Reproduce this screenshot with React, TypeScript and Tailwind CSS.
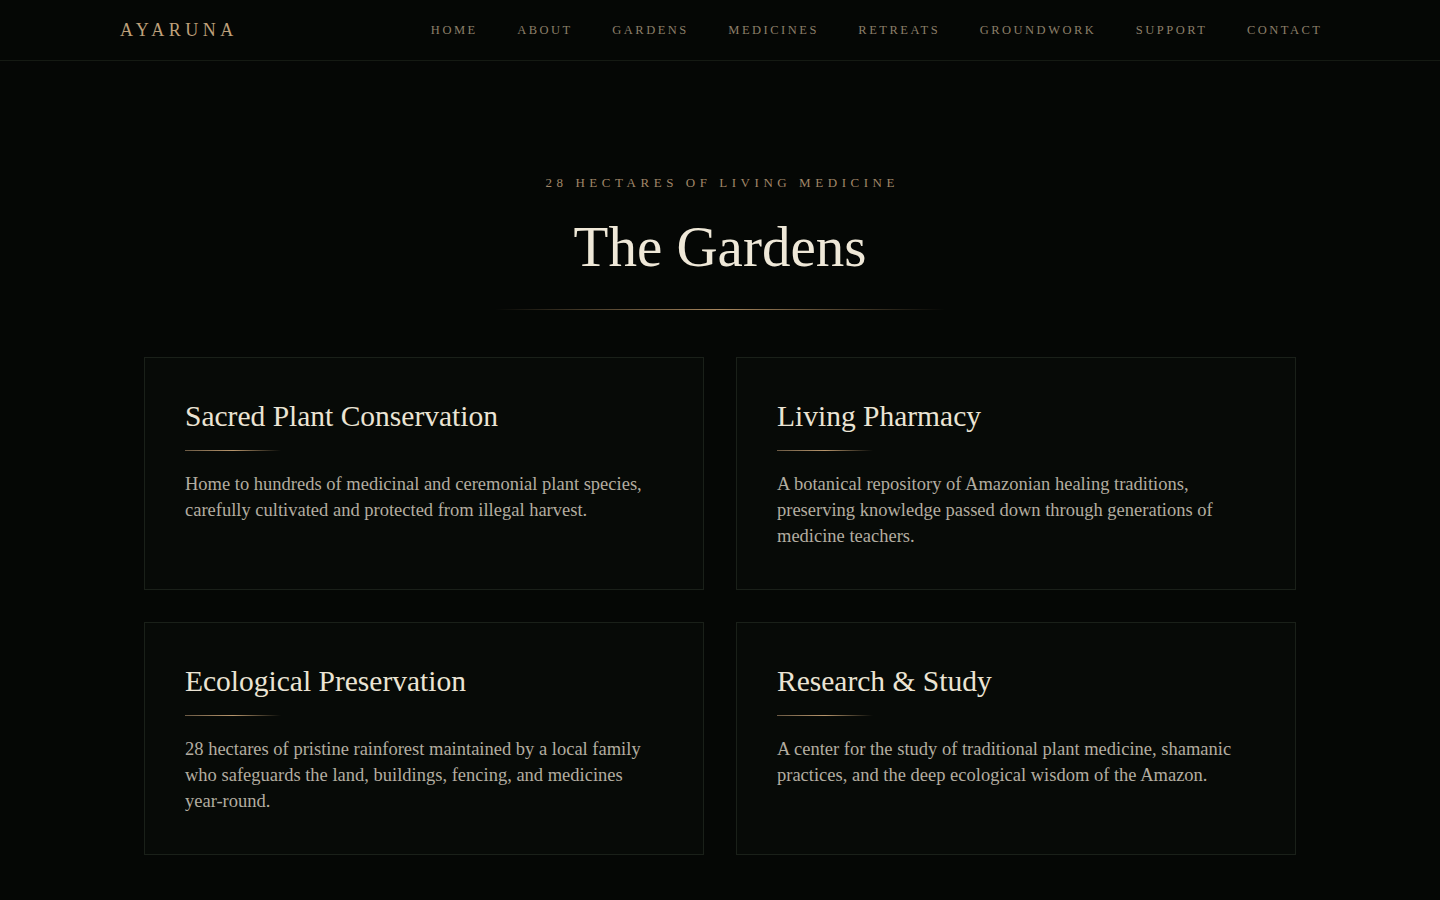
import React from "react";

const serif = { fontFamily: '"Liberation Serif", "Times New Roman", serif' };

const nav = ["Home", "About", "Gardens", "Medicines", "Retreats", "Groundwork", "Support", "Contact"];

const cards = [
  {
    title: "Sacred Plant Conservation",
    body: "Home to hundreds of medicinal and ceremonial plant species, carefully cultivated and protected from illegal harvest.",
  },
  {
    title: "Living Pharmacy",
    body: "A botanical repository of Amazonian healing traditions, preserving knowledge passed down through generations of medicine teachers.",
  },
  {
    title: "Ecological Preservation",
    body: "28 hectares of pristine rainforest maintained by a local family who safeguards the land, buildings, fencing, and medicines year-round.",
  },
  {
    title: "Research & Study",
    body: "A center for the study of traditional plant medicine, shamanic practices, and the deep ecological wisdom of the Amazon.",
  },
];

export default function App() {
  return (
    <div className="min-h-screen w-full bg-[#050705]" style={serif}>
      <header className="h-[61px] border-b border-[#151a13]">
        <div className="mx-auto flex h-[60px] w-[1200px] items-center justify-between">
          <div className="text-[18px] tracking-[0.25em] text-[#bfa07a] mr-[-0.25em]">AYARUNA</div>
          <nav className="flex items-center gap-[39.5px] mr-[-2.5px]">
            {nav.map((n) => (
              <a key={n} className="text-[12.5px] uppercase tracking-[0.2em] text-[#8c7f69]">
                {n}
              </a>
            ))}
          </nav>
        </div>
      </header>

      <section className="mx-auto w-[1152px] pt-[112px] pb-[45px]">
        <div className="flex flex-col items-center">
          <div className="text-[13px] leading-[20px] uppercase tracking-[0.35em] text-[#a08668] mr-[-0.35em]">
            28 Hectares of Living Medicine
          </div>
          <h1 className="mt-[23px] text-[57px] leading-[62px] text-[#efe8d8]">The Gardens</h1>
          <div className="mt-[31px] h-px w-[450px] bg-gradient-to-r from-transparent via-[#a8875f] to-transparent" />
        </div>

        <div className="mt-[47px] grid grid-cols-2 gap-[32px]">
          {cards.map((c) => (
            <div key={c.title} className="border border-[#1a2019] bg-[#070a07] p-[40px]">
              <h2 className="text-[29.5px] leading-[36px] text-[#ebe4d4]">{c.title}</h2>
              <div className="mt-[16px] h-px w-[96px] bg-gradient-to-r from-[#6b5a44] via-[#b8966c] to-transparent" />
              <p className="mt-[20px] text-[18.5px] leading-[26px] text-[#b3ada0]">{c.body}</p>
            </div>
          ))}
        </div>
      </section>
    </div>
  );
}
